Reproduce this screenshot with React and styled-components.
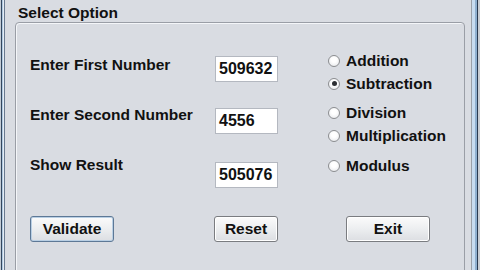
import React from 'react';
import styled, { createGlobalStyle } from 'styled-components';

const GlobalStyle = createGlobalStyle`
  html, body {
    margin: 0;
    padding: 0;
    width: 480px;
    height: 270px;
    overflow: hidden;
    background: #d9dce2;
  }
`;

const Window = styled.div`
  width: 480px;
  height: 270px;
  box-sizing: border-box;
  overflow: hidden;
  padding: 0 9px 0 5px;
  background: #d9dce2;
  font-family: 'Liberation Sans', Arial, sans-serif;
  font-weight: 700;
  color: #111;
  box-shadow:
    inset 1px 0 0 #c4ccd6,
    inset 2px 0 0 #33475f,
    inset 3px 0 0 #b0c8e0,
    inset 4px 0 0 #e4ecf4,
    inset 5px 0 0 #6a7a90,
    inset -2px 0 0 #c8ccd2,
    inset -3px 0 0 #2a3a50,
    inset -5px 0 0 #8fb0d0,
    inset -8px 0 0 #c8dcf0,
    inset -9px 0 0 #9aa0a8;
`;

const Title = styled.div`
  padding: 4px 0 0 13px;
  height: 18px;
  line-height: 18px;
  font-size: 15.5px;
`;

const Panel = styled.div`
  margin: 0 6px 0 10px;
  height: 300px;
  box-sizing: border-box;
  border: 1px solid #9a9ea6;
  border-radius: 4px;
  box-shadow: inset 1px 1px 0 #f4f6f9;
  padding: 29px 0 0 14px;
`;

const Row = styled.div`
  display: flex;
  align-items: flex-start;
  height: 52px;
`;

const Label = styled.div`
  width: 185px;
  margin-top: ${(p) => p.$offset}px;
  font-size: 15.5px;
  line-height: 16px;
`;

const Field = styled.div`
  width: 63px;
  height: 26px;
  box-sizing: border-box;
  margin-top: ${(p) => p.$offset}px;
  border: 1px solid #b4b8c0;
  background: #fff;
  padding: 0 3px;
  font-size: 16px;
  line-height: 24px;
`;

const Options = styled.div`
  display: flex;
  flex-direction: column;
  margin-left: 50px;
  margin-top: ${(p) => p.$offset}px;
`;

const Option = styled.div`
  display: flex;
  align-items: center;
  gap: 6px;
  height: 23px;
  font-size: 15.5px;
`;

const Radio = styled.span`
  position: relative;
  width: 12px;
  height: 12px;
  box-sizing: border-box;
  border-radius: 50%;
  border: 1px solid #8b8d90;
  background: radial-gradient(circle at 50% 40%, #ffffff 30%, #e2e4e8 100%);

  &::after {
    content: '';
    display: ${(p) => (p.$checked ? 'block' : 'none')};
    position: absolute;
    left: 2.5px;
    top: 2.5px;
    width: 5px;
    height: 5px;
    border-radius: 50%;
    background: #2c2f33;
  }
`;

const Buttons = styled.div`
  display: grid;
  grid-template-columns: 184px 132px 84px;
  margin-top: 8px;
`;

const Button = styled.button`
  width: ${(p) => p.$width}px;
  height: 26px;
  padding: 0;
  border: 1px solid ${(p) => (p.$focused ? '#5d7896' : '#7a7c80')};
  border-radius: 3px;
  background: linear-gradient(#fbfbfb, #eceef0 50%, #dcdee2);
  box-shadow: ${(p) => (p.$focused ? 'inset 0 0 0 1px #b9cfe4' : 'inset 0 0 0 1px #ffffff')};
  font-family: 'Liberation Sans', Arial, sans-serif;
  font-weight: 700;
  font-size: 15.5px;
  color: #111;
`;

const rows = [
  { label: 'Enter First Number', value: '509632', labelTop: 5, fieldTop: 4, optTop: -3, options: [['Addition', false], ['Subtraction', true]] },
  { label: 'Enter Second Number', value: '4556', labelTop: 3, fieldTop: 4, optTop: -3, options: [['Division', false], ['Multiplication', false]] },
  { label: 'Show Result', value: '505076', labelTop: 1, fieldTop: 6, optTop: -2, options: [['Modulus', false]] },
];

export default function App() {
  return (
    <Window>
      <GlobalStyle />
      <Title>Select Option</Title>
      <Panel>
        {rows.map((r) => (
          <Row key={r.label}>
            <Label $offset={r.labelTop}>{r.label}</Label>
            <Field $offset={r.fieldTop}>{r.value}</Field>
            <Options $offset={r.optTop}>
              {r.options.map(([name, checked]) => (
                <Option key={name}>
                  <Radio $checked={checked} />
                  {name}
                </Option>
              ))}
            </Options>
          </Row>
        ))}
        <Buttons>
          <Button $width={84} $focused>Validate</Button>
          <Button $width={64}>Reset</Button>
          <Button $width={84}>Exit</Button>
        </Buttons>
      </Panel>
    </Window>
  );
}
